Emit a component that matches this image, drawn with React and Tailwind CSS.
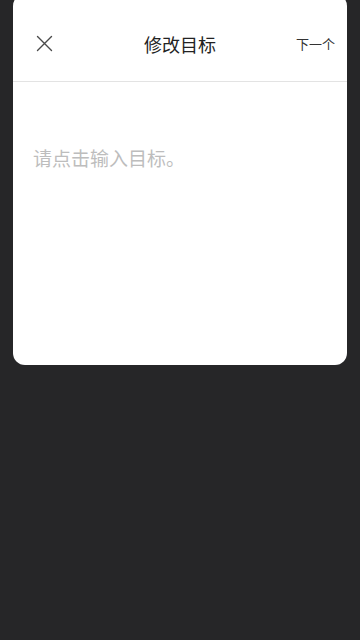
export default function App() {
  return (
    <div className="w-[360px] h-[640px] bg-[#262628] overflow-hidden" style={{ fontFamily: '"Noto Sans CJK SC", "Noto Sans", sans-serif' }}>
      <div className="mx-[13px] mt-[-6px] h-[371px] bg-white rounded-[12px] flex flex-col">
        <div className="h-[88px] pt-[12px] flex items-center relative border-b border-[#e3e3e3]">
          <div className="pl-[23px] flex items-center">
            <svg width="17" height="17" viewBox="0 0 17 17" fill="none" stroke="#4a4a4a" strokeWidth="1.4" strokeLinecap="round">
              <path d="M1.5 1.5 L15.5 15.5 M15.5 1.5 L1.5 15.5" />
            </svg>
          </div>
          <div className="absolute left-0 right-0 top-[12px] bottom-0 flex items-center justify-center pointer-events-none">
            <span className="text-[18px] text-[#222] leading-none">修改目标</span>
          </div>
          <div className="ml-auto pr-[12px] text-[13px] text-[#333] leading-none">下一个</div>
        </div>
        <div className="pl-[20px] pt-[66px] text-[19px] text-[#bdbdbd] leading-none">请点击输入目标。</div>
      </div>
    </div>
  );
}
